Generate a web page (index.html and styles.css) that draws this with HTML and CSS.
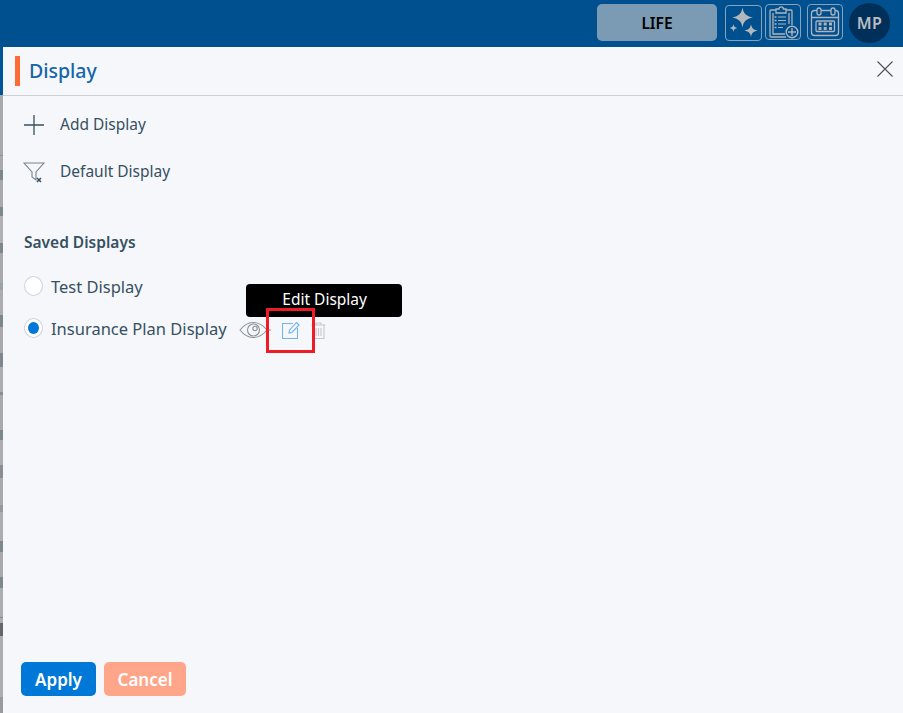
FILE: index.html
```html
<!DOCTYPE html>
<html lang="en">
<head>
<meta charset="utf-8">
<title>Display</title>
<link rel="stylesheet" href="styles.css">
</head>
<body>
<header class="topbar">
  <div class="life">LIFE</div>
  <button class="tool tool-a" aria-label="Assistant">
    <svg viewBox="0 0 35 34" width="35" height="34"><g fill="#b4b8bd"><path d="M16.500 1.500c1 6 3.500 8.500 10.500 10-7 1.500-9.500 4-10.500 10-1-6-3.500-8.500-10.500-10 7-1.500 9.500-4 10.500-10z"/><path d="M25 18c.6 4 2 5.500 6.500 6.500-4.500 1-5.900 2.500-6.500 6.500-.6-4-2-5.500-6.500-6.500 4.500-1 5.900-2.500 6.500-6.500z"/><path d="M7.500 18c.4 2.700 1.300 3.500 4 4-2.700.5-3.600 1.300-4 4-.4-2.700-1.300-3.500-4-4 2.700-.5 3.600-1.300 4-4z"/></g></svg>
  </button>
  <button class="tool tool-b" aria-label="Add clipboard">
    <svg viewBox="0 0 34 34" width="34" height="34" fill="none" stroke="#aeb4ba" stroke-width="1.300"><path d="M10 5H5a1 1 0 0 0-1 1v25a1 1 0 0 0 1 1h15"/><path d="M26 20V6a1 1 0 0 0-1-1h-5"/><path d="M10 8V4h3a2.200 2.200 0 1 1 4.400 0H20v4z"/><path d="M7 8v21h12M23 19V8"/><path d="M12 12h8M12 15.500h8M12 19h8M12 22.500h5" stroke-width="1.200"/><path d="M8.500 12h2M8.500 15.500h2M8.500 19h2M8.500 22.500h2" stroke-width="1.500"/><circle cx="26" cy="27" r="5.800" fill="#00508f" stroke-width="1.400"/><path d="M26 23v8M22 27h8" stroke-width="1.400"/></svg>
  </button>
  <button class="tool tool-c" aria-label="Calendar">
    <svg viewBox="0 0 34 34" width="34" height="34" fill="none" stroke="#aeb4ba" stroke-width="1.300"><rect x="3.500" y="5.500" width="27" height="25" rx="3"/><path d="M3.500 12.500h27"/><rect x="9" y="3" width="4" height="7" rx="2" fill="#00508f"/><rect x="23" y="3" width="4" height="7" rx="2" fill="#00508f"/><rect x="8" y="16" width="18.500" height="10.500" rx="1"/><g fill="#aeb4ba" stroke="none"><rect x="10.500" y="17.500" width="3" height="3"/><rect x="15.700" y="17.500" width="3" height="3"/><rect x="21" y="17.500" width="3" height="3"/><rect x="10.500" y="22" width="3" height="3"/><rect x="15.700" y="22" width="3" height="3"/><rect x="21" y="22" width="3" height="3"/></g></svg>
  </button>
  <div class="avatar">MP</div>
</header>
<div class="stage">
  <div class="backdrop"></div>
  <main class="panel">
    <div class="panel-head">
      <span class="accent"></span>
      <h1>Display</h1>
      <svg class="close" viewBox="0 0 16 16" width="16" height="16" fill="none" stroke="#4a4f55" stroke-width="1.100"><path d="M.5.500l15 15M15.500.500l-15 15"/></svg>
    </div>
    <div class="panel-body">
      <div class="action">
        <svg viewBox="0 0 22 22" width="22" height="22" fill="none" stroke="#37505f" stroke-width="1.300"><path d="M11 1v20M1 11h20"/></svg>
        <span class="action-label">Add Display</span>
      </div>
      <div class="action action-filter">
        <svg viewBox="0 0 22 22" width="22" height="22" fill="none" stroke="#75858f" stroke-width="1.100"><path d="M1 2h20l-8 9v8l-4-3v-5z"/><path d="M14 17l4 4M18 17l-4 4" stroke="#37505f" stroke-width="1.500"/></svg>
        <span class="action-label">Default Display</span>
      </div>
      <h2>Saved Displays</h2>
      <div class="saved">
        <span class="radio"></span>
        <span class="saved-name">Test Display</span>
      </div>
      <div class="saved saved-active">
        <span class="radio radio-on"></span>
        <span class="saved-name">Insurance Plan Display</span>
        <div class="row-icons">
          <svg viewBox="0 0 32 18" width="32" height="18" fill="none" stroke="#8b9299" stroke-width="1.100"><path d="M1 9c4-5 8.500-7.500 13-7.500S24 4 28 9c-4 5-9 7.500-14 7.500S5 14 1 9z"/><circle cx="14.500" cy="9" r="6"/><circle cx="16" cy="7.500" r="2.200"/><path d="M30 9h2"/></svg>
          <svg class="edit" viewBox="0 0 18 18" width="18" height="18" fill="none" stroke="#6fb4ea" stroke-width="1.100"><path d="M11 2.500H.5v15h15V7"/><path d="M7 12l.6-3L14.500 1.500l2.500 2.500-7 7.500z"/></svg>
          <svg class="trash" viewBox="0 0 15 17" width="15" height="17" fill="none" stroke="#c3c7cb" stroke-width="1.100"><path d="M.5 3h14M5 3V1h5v2M2 3v13.500h11V3M5 6v8M7.500 6v8M10 6v8"/></svg>
          <div class="tooltip">Edit Display</div>
          <div class="highlight"></div>
        </div>
      </div>
    </div>
    <div class="panel-foot">
      <button class="btn btn-apply">Apply</button>
      <button class="btn btn-cancel">Cancel</button>
    </div>
  </main>
</div>
</body>
</html>
```
FILE: styles.css
```css
* { box-sizing: border-box; }
html, body { height: 100%; }
body {
  margin: 0;
  display: flex;
  flex-direction: column;
  height: 713px;
  overflow: hidden;
  font-family: "Noto Sans", "Open Sans", sans-serif;
  color: #37505f;
  background: #f5f7fb;
}
.topbar {
  height: 47px;
  flex: none;
  background: #00508f;
  display: flex;
  align-items: center;
  justify-content: flex-end;
  padding: 0 13px 2px 0;
}
.life {
  width: 120px;
  height: 37px;
  margin-right: 8px;
  border-radius: 5px;
  background: #7b9ab3;
  color: #000;
  font-size: 15.500px;
  font-weight: 600;
  display: flex;
  align-items: center;
  justify-content: center;
}
.tool {
  padding: 0;
  background: transparent;
  border: 1px solid #87a2bb;
  border-radius: 4px;
  height: 36px;
  display: flex;
  align-items: center;
  justify-content: center;
  overflow: hidden;
}
.tool-a { width: 37px; margin-right: 3px; margin-top: 1px; }
.tool-b { width: 36px; margin-right: 6px; margin-bottom: 1px; }
.tool-c { width: 36px; margin-right: 6px; margin-bottom: 1px; }
.avatar {
  width: 41px;
  height: 40px;
  border-radius: 50%;
  background: #003059;
  color: #b9bdc2;
  font-size: 16px;
  font-weight: 600;
  letter-spacing: .5px;
  display: flex;
  align-items: center;
  justify-content: center;
}
.stage { flex: 1; display: flex; min-height: 0; }
.backdrop {
  width: 3px;
  flex: none;
  background: linear-gradient(to bottom,
    #00549a 0 48px, #a9a9ac 48px 108px, #8f9295 108px 109px, #a9a9ac 109px 123px,
    #7d878e 123px 133px, #a9a9ac 133px 160px, #7d878e 160px 169px, #b0b0b2 169px 196px,
    #7d878e 196px 206px, #a9a9ac 206px 236px, #98a2ab 236px 243px, #adadb0 243px 268px,
    #7d878e 268px 280px, #a9a9ac 280px 306px, #7d878e 306px 320px, #adadb0 320px 345px,
    #878e94 345px 348px, #a9a9ac 348px 383px, #7d878e 383px 393px, #adadb0 393px 418px,
    #878e94 418px 431px, #a9a9ac 431px 458px, #929aa0 458px 465px, #adadb0 465px 494px,
    #7d878e 494px 505px, #a9a9ac 505px 530px, #7d878e 530px 541px, #adadb0 541px 570px,
    #7d878e 570px 571px, #adadb0 571px 576px, #66666a 576px 589px, #adadaf 589px 650px,
    #9a9a9c 650px);
}
.panel {
  flex: 1;
  display: flex;
  flex-direction: column;
  background: #f5f7fb;
}
.panel-head {
  height: 49px;
  flex: none;
  display: flex;
  align-items: center;
  padding: 0 10px 0 12px;
  border-bottom: 1px solid #cdd0d6;
}
.accent { width: 5px; height: 30px; background: #ff6b35; margin-right: 9px; }
.panel-head h1 {
  margin: 0;
  flex: 1;
  font-size: 19.500px;
  font-weight: 500;
  color: #1565a8;
  line-height: 1;
}
.close { margin-bottom: 4px; }
.panel-body { flex: 1; padding: 0 0 0 20px; min-height: 0; }
.action {
  display: flex;
  align-items: center;
  height: 22px;
  margin-top: 18px;
  font-size: 15.500px;
}
.action svg { margin-right: 15px; flex: none; }
.action-label { padding-bottom: 2px; }
.action-filter { margin-top: 25px; }
.panel-body h2 {
  margin: 49px 0 0 1px;
  font-size: 15.500px;
  font-weight: 600;
  line-height: 20px;
  color: #37505f;
}
.saved {
  display: flex;
  align-items: center;
  height: 22px;
  margin-top: 23px;
  margin-left: 1px;
  font-size: 16.500px;
}
.saved-active { margin-top: 20px; }
.radio {
  width: 19px;
  height: 20px;
  border-radius: 50%;
  border: 1px solid #cfd3d9;
  background: #fff;
  margin-right: 8px;
  flex: none;
  position: relative;
}
.radio-on::after {
  content: "";
  position: absolute;
  top: 3px;
  left: 3px;
  width: 11px;
  height: 12px;
  border-radius: 50%;
  background: #0078d7;
}
.row-icons {
  position: relative;
  display: flex;
  align-items: center;
  margin-left: 12px;
  margin-top: 3px;
}
.edit { margin-left: 11px; }
.trash { margin-left: 11px; margin-top: 1px; }
.tooltip {
  position: absolute;
  left: 7px;
  bottom: 22px;
  width: 156px;
  height: 33px;
  padding: 0 0 2px 2px;
  border-radius: 4px;
  background: #000;
  color: #fff;
  font-size: 15.500px;
  display: flex;
  align-items: center;
  justify-content: center;
}
.highlight {
  position: absolute;
  left: 27px;
  top: -13px;
  width: 49px;
  height: 45px;
  border: 3px solid #ee1c25;
}
.panel-foot {
  flex: none;
  display: flex;
  gap: 8px;
  padding: 0 0 17px 18px;
}
.btn {
  height: 34px;
  border: 0;
  border-radius: 5px;
  color: #fff;
  font-family: inherit;
  font-size: 17px;
  font-weight: 600;
  padding: 0;
}
.btn-apply { width: 75px; background: #0078d7; }
.btn-cancel { width: 82px; background: #ffa58a; }
```
